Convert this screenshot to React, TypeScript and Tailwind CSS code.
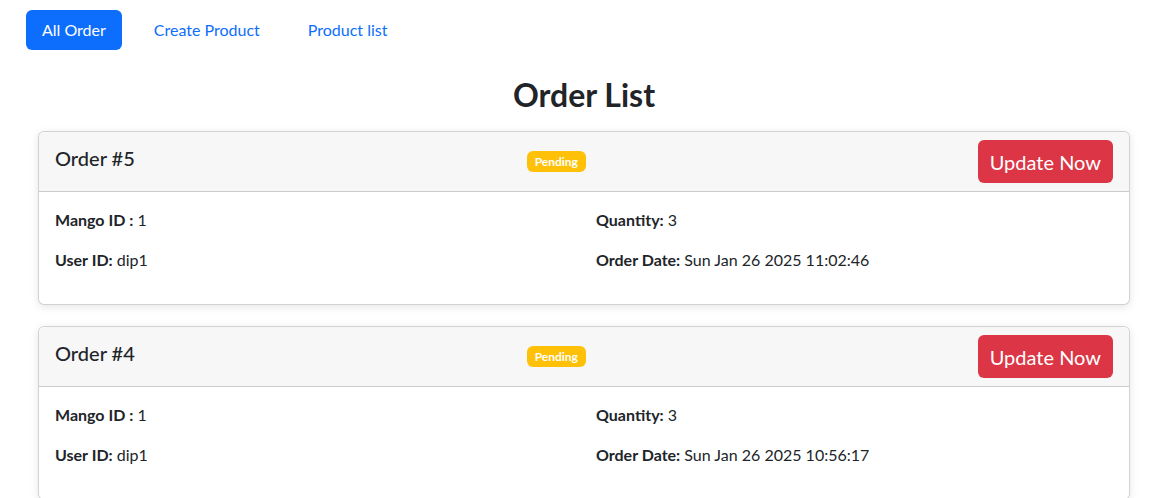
import { useState } from 'react'

interface Order {
    id: number
    mangoId: number
    quantity: number
    userId: string
    orderDate: string
    status: string
}

const orders: Order[] = [
    { id: 5, mangoId: 1, quantity: 3, userId: 'dip1', orderDate: 'Sun Jan 26 2025 11:02:46', status: 'Pending' },
    { id: 4, mangoId: 1, quantity: 3, userId: 'dip1', orderDate: 'Sun Jan 26 2025 10:56:17', status: 'Pending' },
]

const tabs = ['All Order', 'Create Product', 'Product list']

function OrderCard({ order }: { order: Order }) {
    return (
        <div className="bg-white border border-black/[.175] rounded-md overflow-hidden shadow-[0_0.125rem_0.5rem_rgba(0,0,0,0.1)]">
            {/* Header */}
            <div className="flex items-center justify-between px-4 py-2 bg-[#f7f7f7] border-b border-black/[.175]">
                <h5 className="text-xl font-medium leading-6 mb-2">Order #{order.id}</h5>
                <span className="bg-[#ffc107] text-white text-xs font-bold leading-none px-[7.8px] py-[4.2px] rounded-md">
                    {order.status}
                </span>
                <button className="h-[43px] px-3 flex items-center bg-[#dc3545] text-white text-xl rounded-md">
                    Update Now
                </button>
            </div>

            {/* Body */}
            <div className="p-4 grid grid-cols-2 gap-x-6 leading-6">
                <div>
                    <p className="mb-4"><strong className="font-bold">Mango ID :</strong> {order.mangoId}</p>
                    <p className="mb-4"><strong className="font-bold">User ID:</strong> {order.userId}</p>
                </div>
                <div>
                    <p className="mb-4"><strong className="font-bold">Quantity:</strong> {order.quantity}</p>
                    <p className="mb-4"><strong className="font-bold">Order Date:</strong> {order.orderDate}</p>
                </div>
            </div>
        </div>
    )
}

export default function App() {
    const [active, setActive] = useState('All Order')

    return (
        <div className="min-h-screen bg-white text-[#212529] text-base font-['Lato','Liberation_Sans',sans-serif]">
            <nav className="flex gap-4 pl-[26px] pt-[10px]">
                {tabs.map((tab) => (
                    <button
                        key={tab}
                        onClick={() => setActive(tab)}
                        className={
                            active === tab
                                ? 'px-4 py-2 leading-6 rounded-md bg-[#0d6efd] text-white'
                                : 'px-4 py-2 leading-6 rounded-md text-[#0d6efd]'
                        }
                    >
                        {tab}
                    </button>
                ))}
            </nav>

            <div className="pl-[38px] pr-[33px]">
                <h2 className="mt-[26px] text-[32px] font-bold leading-[38px] text-center">Order List</h2>
                <div className="mt-[17px] flex flex-col gap-[21px]">
                    {orders.map((order) => (
                        <OrderCard key={order.id} order={order} />
                    ))}
                </div>
            </div>
        </div>
    )
}
